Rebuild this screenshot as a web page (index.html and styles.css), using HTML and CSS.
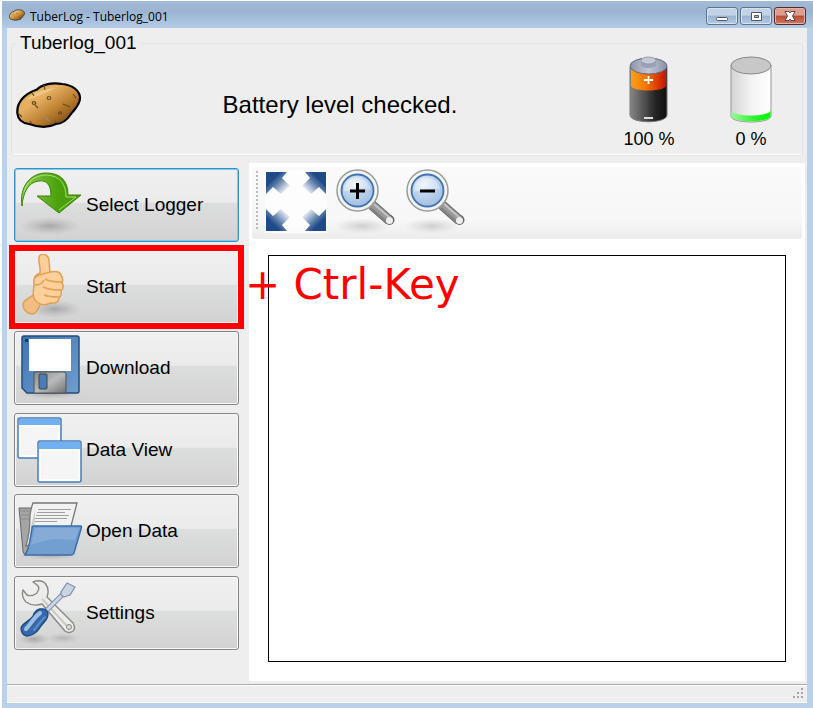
FILE: index.html
```html
<!DOCTYPE html>
<html lang="en">
<head>
    <meta charset="utf-8">
    <title>TuberLog - Tuberlog_001</title>
    <link rel="stylesheet" href="styles.css">
</head>
<body>
    <!-- shared gradients and symbols -->
    <svg class="defs" width="0" height="0" aria-hidden="true">
        <defs>
            <radialGradient id="shade">
                <stop offset="0" stop-color="#777" stop-opacity=".5"/>
                <stop offset="1" stop-color="#999" stop-opacity="0"/>
            </radialGradient>
            <linearGradient id="skin" x1="0" y1="0" x2="1" y2="1">
                <stop offset="0" stop-color="#dba95a"/>
                <stop offset=".35" stop-color="#e5b063"/>
                <stop offset=".6" stop-color="#bd8030"/>
                <stop offset="1" stop-color="#5a3004"/>
            </linearGradient>
            <linearGradient id="blue" x1="0" y1="0" x2="1" y2="1">
                <stop offset="0" stop-color="#3f74b4"/>
                <stop offset="1" stop-color="#6f9dcd"/>
            </linearGradient>
            <linearGradient id="metal" x1="0" y1="0" x2="1" y2="1">
                <stop offset="0" stop-color="#888"/>
                <stop offset=".5" stop-color="#bbb"/>
                <stop offset="1" stop-color="#707070"/>
            </linearGradient>
            <radialGradient id="lens" cx=".4" cy=".3" r=".7">
                <stop offset="0" stop-color="#e8f1fa"/>
                <stop offset=".5" stop-color="#bcd3ec"/>
                <stop offset="1" stop-color="#a3c0e2"/>
            </radialGradient>
            <linearGradient id="fade" gradientUnits="userSpaceOnUse" x1="11" y1="12" x2="23" y2="24">
                <stop offset="0" stop-color="#204a87"/>
                <stop offset=".35" stop-color="#5d7daa"/>
                <stop offset="1" stop-color="#e9eef5"/>
            </linearGradient>
        </defs>
        <symbol id="potato" viewBox="0 0 66 46">
            <path d="M1.500 32C0 21 8 12 21 7.500C25 3 35 0 46 2C57 3 64 9 64 16C64 23 58 28 55 32C51 38 47 42 40 42C34 45 24 46 13 42C6 41 2 37 1.500 32Z" fill="url(#skin)" stroke="#000" stroke-width="2.200"/>
            <path d="M9 19Q20 7 40 6Q29 11 22 14Q13 18 9 19Z" fill="#fbdba8" opacity=".5"/>
            <g fill="none" stroke="#6b4a1e" stroke-width="1.200">
                <ellipse cx="33" cy="16" rx="1.800" ry="1.500"/><ellipse cx="18" cy="21" rx="1.800" ry="1.400"/><ellipse cx="44" cy="31" rx="1.500" ry="1.200"/>
                <path d="M19 23L22 26M47 22L54 25M28 3L29 8M16 11L18 14M57 12L60 16M3 32L6 35M14 39L16 42M39 39L41 41"/>
                <path d="M26 34L34 39" stroke="#998877"/>
            </g>
        </symbol>
        <symbol id="magnifier" viewBox="0 0 66 70">
            <ellipse cx="30" cy="59" rx="28" ry="8" fill="url(#shade)" opacity=".6"/>
            <path d="M40 38L57 53" stroke="#666" stroke-width="10"/>
            <circle cx="57.500" cy="53" r="5" fill="#666"/>
            <path d="M40 38L57 53" stroke="#999" stroke-width="8"/>
            <path d="M42 37L58 51" stroke="#c4c4c4" stroke-width="2"/>
            <path d="M39 41L54 54" stroke="#7d7d7d" stroke-width="1.500"/>
            <circle cx="57.500" cy="53.500" r="3.500" fill="#eee"/>
            <circle cx="25.500" cy="23.500" r="20.500" fill="#f3f3f1" stroke="#999b98" stroke-width="1.500"/>
            <circle cx="25.500" cy="23.500" r="16" fill="url(#lens)" stroke="#3f73b1" stroke-width="1.800"/>
            <path d="M12 25A13 13 0 0 1 38 22Q26 20 12 25Z" fill="#fff" opacity=".35"/>
        </symbol>
        <symbol id="corner" viewBox="0 0 66 70">
            <path d="M4 5H25L20 11L28 19L19 27L11 20L4 27Z" fill="url(#fade)"/>
        </symbol>
    </svg>

    <div class="window">
        <header class="titlebar">
            <svg class="app-icon"><use href="#potato"/></svg>
            <h1>TuberLog - Tuberlog_001</h1>
            <div class="window-buttons">
                <button type="button" aria-label="Minimize">
                    <svg width="30" height="16" viewBox="0 0 30 16"><rect x="9.500" y="9.500" width="11" height="3" rx="1" fill="#fff" stroke="#535666"/></svg>
                </button>
                <button type="button" aria-label="Maximize">
                    <svg width="30" height="16" viewBox="0 0 30 16"><path d="M10.500 4.500H20.500V12.500H10.500ZM13.500 7.500H17.500V9.500H13.500Z" fill="#fff" fill-rule="evenodd" stroke="#535666"/></svg>
                </button>
                <button type="button" class="close" aria-label="Close">
                    <svg width="30" height="16" viewBox="0 0 30 16"><path d="M10 3.500H14L15 5L16 3.500H20L17.500 8L20 12.500H16L15 11L14 12.500H10L12.500 8Z" fill="#fff" stroke="#5b4546"/></svg>
                </button>
            </div>
        </header>

        <div class="client">
            <fieldset class="logger">
                <legend>Tuberlog_001</legend>
                <div class="logger-row">
                    <svg class="potato"><use href="#potato"/></svg>
                    <p class="message">Battery level checked.</p>
                    <div class="gauge">
                        <svg width="42" height="68" viewBox="0 0 42 68">
                            <defs>
                                <linearGradient id="cell"><stop offset="0" stop-color="#888"/><stop offset=".35" stop-color="#555"/><stop offset=".7" stop-color="#222"/><stop offset="1" stop-color="#111"/></linearGradient>
                                <linearGradient id="orange"><stop offset="0" stop-color="#f9a11b"/><stop offset=".4" stop-color="#f57900"/><stop offset="1" stop-color="#c81400"/></linearGradient>
                                <linearGradient id="cap"><stop offset="0" stop-color="#8c93a8"/><stop offset=".5" stop-color="#c3c8d8"/><stop offset="1" stop-color="#8a8fa5"/></linearGradient>
                            </defs>
                            <path d="M2 11V59C2 68 39 68 39 59V11Z" fill="url(#cell)" stroke="#777"/>
                            <path d="M3 12V30C5 36 36 36 38 30V12Z" fill="url(#orange)"/>
                            <ellipse cx="20.500" cy="10" rx="18.500" ry="8" fill="url(#cap)" stroke="#666b7c"/>
                            <path d="M13 4V9C13 13 28 13 28 9V4Z" fill="#9ca2b6"/>
                            <ellipse cx="20.500" cy="4.500" rx="7.500" ry="3.500" fill="#c5cad9" stroke="#8b90a3" stroke-width=".8"/>
                            <path d="M16 24H25M20.500 20V28" stroke="#fff" stroke-width="1.800"/>
                            <path d="M16 62H25" stroke="#ddd" stroke-width="2"/>
                        </svg>
                        <span>100 %</span>
                    </div>
                    <div class="gauge">
                        <svg width="42" height="68" viewBox="0 0 42 68">
                            <defs>
                                <linearGradient id="glass"><stop offset="0" stop-color="#d4d4d4"/><stop offset=".5" stop-color="#f3f3f3"/><stop offset="1" stop-color="#fff"/></linearGradient>
                                <linearGradient id="green"><stop offset="0" stop-color="#9af79a"/><stop offset=".6" stop-color="#27f527"/><stop offset="1" stop-color="#0f0"/></linearGradient>
                            </defs>
                            <path d="M1 9V60C1 68 41 68 41 60V9Z" fill="url(#glass)" stroke="#999"/>
                            <path d="M1.500 55C6 61 36 61 40.500 55V60C40.500 67 1.500 67 1.500 60Z" fill="url(#green)"/>
                            <ellipse cx="21" cy="9.500" rx="20" ry="8.500" fill="#c8c8c8" stroke="#888"/>
                        </svg>
                        <span>0 %</span>
                    </div>
                </div>
            </fieldset>

            <div class="content">
                <nav class="sidebar">
                    <button type="button" class="action focused">
                        <svg viewBox="0 0 66 66">
                            <defs><linearGradient id="leaf" x1="0" y1="0" x2="1" y2="0"><stop offset="0" stop-color="#8ed04f"/><stop offset=".6" stop-color="#4ba20c"/><stop offset="1" stop-color="#4e9a06"/></linearGradient></defs>
                            <ellipse cx="33" cy="54" rx="30" ry="9" fill="url(#shade)"/>
                            <path d="M5 34C2 14 14 1 29 1C44 1 51 9 51 23H64L42 41L20 24H34C34 12 29 8 22 9C11 10 6 21 5 34Z" fill="url(#leaf)" stroke="#3d8205" stroke-linejoin="round"/>
                            <path d="M7 20C10 8 20 3 30 3C43 4 49 12 49 25H59L42 38" fill="none" stroke="#a3df72" stroke-width="1"/>
                        </svg>
                        Select Logger
                    </button>
                    <div class="callout">
                        <button type="button" class="action">
                            <svg viewBox="0 0 66 66">
                                <ellipse cx="38" cy="55" rx="27" ry="9" fill="url(#shade)"/>
                                <path d="M17 40C14 44 7 45 6 50C6 55 8 59 15 60C20 60 21 54 23 51L29 46Z" fill="#f2bd84" stroke="#e0a058" stroke-width="1.500"/>
                                <path d="M23 19C24 13 21 9 22 3C23 0 28 -1 31 3C33 7 32 13 33 18C38 17 43 17 44 21C46 24 46 27 45 29C47 32 46 35 44 37C45 40 44 42 42 44C42 48 38 50 33 49C28 52 24 51 20 48C14 44 17 36 17 30C16 25 18 21 23 19Z" fill="#fcd09a" stroke="#e0a058" stroke-width="1.500" stroke-linejoin="round"/>
                                <path d="M18 24C21 20 27 20 34 18M28 25C33 28 40 28 45 28M26 33C32 36 39 36 44 36M27 41C32 43 37 43 42 43M18 31Q25 31 27 26" fill="none" stroke="#e0a058" stroke-width="1.500"/>
                            </svg>
                            Start
                        </button>
                        <span class="callout-text">+ Ctrl-Key</span>
                    </div>
                    <button type="button" class="action">
                        <svg viewBox="0 0 66 66">
                            <ellipse cx="34" cy="58" rx="32" ry="6" fill="url(#shade)"/>
                            <path d="M5 3Q5 1 7 1H60Q62 1 62 3V56Q62 58 60 58H10L5 53Z" fill="url(#blue)" stroke="#244d7c" stroke-width="1.500"/>
                            <path d="M12 4H54V36H12Z" fill="#fff"/>
                            <rect x="8" y="4" width="3" height="3" fill="#173961"/>
                            <path d="M17 58V39Q17 37 19 37H47Q49 37 49 39V58Z" fill="url(#metal)" stroke="#555"/>
                            <rect x="22" y="39" width="8" height="15" rx="1" fill="#4b7cb8" stroke="#444"/>
                        </svg>
                        Download
                    </button>
                    <button type="button" class="action">
                        <svg viewBox="0 0 66 66">
                            <g fill="#f5f5f5" stroke="#4580bd" stroke-width="1.500">
                                <rect x="1" y="1" width="43" height="40" rx="2"/>
                                <path d="M2 2H43V8H2Z" fill="#72b0f2" stroke="none"/>
                                <path d="M3 9H42V39H3Z" fill="none" stroke="#fff"/>
                                <rect x="21" y="24" width="43" height="41" rx="2"/>
                                <path d="M22 25H63V32H22Z" fill="#72b0f2" stroke="none"/>
                                <path d="M23 33H62V63H23Z" fill="none" stroke="#fff"/>
                            </g>
                        </svg>
                        Data View
                    </button>
                    <button type="button" class="action">
                        <svg viewBox="0 0 66 66">
                            <ellipse cx="33" cy="57" rx="30" ry="5" fill="url(#shade)"/>
                            <path d="M2 10H18V40L8 56Q6 56 6 53Z" fill="#a5a5a5" stroke="#666"/>
                            <path d="M4 13H15M4 17H15M4 21H14" stroke="#8c8c8c"/>
                            <path d="M16 5H60L53 32L9 48Q13 35 13 17Q14 10 16 5Z" fill="#f2f2f2" stroke="#777" stroke-width="1.300"/>
                            <path d="M9 47Q14 42 14 28L18 12Q19 35 9 47Z" fill="#aaa" opacity=".5"/>
                            <path d="M21 11.500H54M20 14.500H48M19 17.500H52M18 20.500H50M18 23.500H40" stroke="#a0a0a0"/>
                            <path d="M17 28H64Q65 28 64 31L57 55Q56 57 54 57H8Q12 52 15 30Q15 28 17 28Z" fill="#729fcf" stroke="#3b6ea7" stroke-width="1.500"/>
                            <path d="M18 30H62L58 42Q30 39 14 47Z" fill="#9bbce0" opacity=".45"/>
                        </svg>
                        Open Data
                    </button>
                    <button type="button" class="action">
                        <svg viewBox="0 0 66 66">
                            <ellipse cx="17" cy="59" rx="16" ry="6" fill="url(#shade)"/>
                            <ellipse cx="46" cy="58" rx="18" ry="5" fill="url(#shade)" opacity=".7"/>
                            <path d="M16 2Q23 -1 28 3Q33 9 30 17L56 43Q59 48 56 51Q52 54 48 51L25 24Q16 27 9 22Q4 17 6 10L10 15Q15 17 20 13Q23 8 21 6Q19 4 16 2Z" fill="#ececea" stroke="#888a85" stroke-width="1.400" stroke-linejoin="round"/>
                            <path d="M25 19L50 46" stroke="#c9c9c6" stroke-width="2"/>
                            <circle cx="52" cy="47" r="2.500" fill="#ddd" stroke="#888"/>
                            <path d="M28 32L47 13" stroke="#7f90a8" stroke-width="5"/>
                            <path d="M28 32L47 13" stroke="#cbd6e4" stroke-width="3"/>
                            <path d="M44 12L50 3L58 7L53 15L47 17L44 15Z" fill="#c9d5e4" stroke="#8191aa" stroke-width="1.300" stroke-linejoin="round"/>
                            <path d="M23 29Q31 28 31 34C31 41 25 43 22 49Q18 55 10 56Q4 55 4 48C6 42 12 42 16 36Q18 30 23 29Z" fill="#3569ab" stroke="#1f4a80" stroke-width="1.300"/>
                            <path d="M23 33C16 38 15 43 9 49" fill="none" stroke="#9dbfe4" stroke-width="4" stroke-linecap="round"/>
                            <path d="M28 37C24 40 22 44 17 50" fill="none" stroke="#5b8fca" stroke-width="2" stroke-linecap="round"/>
                        </svg>
                        Settings
                    </button>
                </nav>

                <main class="view">
                    <div class="toolbar">
                        <span class="grip"></span>
                        <button type="button" class="tool" aria-label="Fit to window">
                            <svg viewBox="0 0 66 70">
                                <rect x="3" y="4" width="62" height="62" fill="#fff" opacity=".7"/>
                                <use href="#corner" width="66" height="70"/>
                                <use href="#corner" width="66" height="70" transform="matrix(-1 0 0 1 68 0)"/>
                                <use href="#corner" width="66" height="70" transform="matrix(1 0 0 -1 0 69)"/>
                                <use href="#corner" width="66" height="70" transform="matrix(-1 0 0 -1 68 69)"/>
                            </svg>
                        </button>
                        <button type="button" class="tool" aria-label="Zoom in">
                            <svg viewBox="0 0 66 70"><use href="#magnifier"/><path d="M18 24H33M25.500 16V32" stroke="#000" stroke-width="3"/></svg>
                        </button>
                        <button type="button" class="tool" aria-label="Zoom out">
                            <svg viewBox="0 0 66 70"><use href="#magnifier"/><path d="M18 24H33" stroke="#000" stroke-width="3"/></svg>
                        </button>
                    </div>
                    <div class="plot"></div>
                </main>
            </div>

            <footer class="statusbar">
                <svg width="12" height="12" viewBox="0 0 12 12" fill="#a5a5a5"><path d="M8 0h2v2h-2zM8 4h2v2h-2zM4 4h2v2h-2zM8 8h2v2h-2zM4 8h2v2h-2zM0 8h2v2h-2z"/></svg>
            </footer>
        </div>
    </div>
</body>
</html>
```

FILE: styles.css
```css
* { box-sizing: border-box; }
body { margin: 0; padding: 1px 0 0 2px; background: #fff; color: #000; font-family: "Liberation Sans", Arial, sans-serif; font-size: 20px; }
button { font: inherit; color: inherit; padding: 0; }
svg { display: block; flex: none; }
.defs { position: absolute; }

.window { display: flex; flex-direction: column; min-height: calc(100vh - 1px); padding: 0 6px 5px 5px; background: #b9d1ea; }

/* title bar */
.titlebar { display: flex; align-items: center; gap: 5px; height: 27px; margin: 0 -6px 0 -5px; padding: 0 7px 0 7px; background: linear-gradient(#a3b9d5, #9bb4d2 40%, #b4cce6); }
.titlebar h1 { flex: 1; margin: 0; padding-top: 3px; font: 12px "Open Sans", "Noto Sans", sans-serif; }
.app-icon { width: 16px; height: 12px; }
.window-buttons { display: flex; align-self: flex-start; gap: 2px; padding-top: 6px; }
.window-buttons button { width: 32px; height: 18px; border: 1px solid #5f7390; border-radius: 3px; background: linear-gradient(#c3d3e6 45%, #9bb2cf 50%, #b5cbe3); box-shadow: inset 0 0 0 1px #d5e2f0; }
.window-buttons .close { border-color: #562b2b; background: linear-gradient(#dc9c90 45%, #b94a37 50%, #cc7a62); box-shadow: inset 0 0 0 1px #e4b3aa; }

.client { display: flex; flex: 1; flex-direction: column; background: #eee; }

/* logger state */
.logger { margin: 3px 4px 0; padding: 0; border: 1px solid #dfe4e8; border-radius: 3px; box-shadow: inset 0 -1px #fff; }
.logger legend { margin-left: 4px; padding: 0 4px; line-height: 24px; font-size: 19px; }
.logger-row { display: flex; align-items: center; height: 100px; padding-left: 4px; }
.potato { width: 66px; height: 46px; }
.message { flex: 1; margin: 0; font-size: 24px; text-align: center; }
.gauge { display: flex; flex-direction: column; align-items: center; gap: 3px; width: 102px; padding-bottom: 4px; font-size: 18px; line-height: 24px; }

.content { display: flex; flex: 1; padding: 7px 2px 3px 7px; }

/* left buttons */
.sidebar { display: flex; flex-direction: column; justify-content: space-between; width: 225px; margin-right: 10px; padding: 5px 0 31px; }
.action { display: flex; align-items: center; gap: 3px; width: 100%; height: 74px; padding-left: 2px; border: 1px solid #858585; border-radius: 3px; background: linear-gradient(#f0f0f0, #ebebeb 46%, #dcdedd 48%, #d2d2d2); box-shadow: inset 0 0 0 1px #f8f8f8; font-size: 19px; text-align: left; }
.action svg { width: 66px; height: 66px; }
.focused { border-color: #3c8fc4; box-shadow: inset 0 0 0 1px #74d0f1; }

/* red marker round a button */
.callout { position: relative; }
.callout .action { border-radius: 0; outline: 6px solid #f00; outline-offset: -1px; }
.callout-text { position: absolute; top: 11px; left: 231px; color: #f00; font: 42px/48px "DejaVu Sans", Verdana, sans-serif; white-space: nowrap; }

/* plot area */
.view { display: flex; flex: 1; flex-direction: column; padding: 4px 3px 19px; background: #fff; }
.toolbar { display: flex; gap: 4px; height: 72px; padding-left: 3px; border-radius: 3px; background: linear-gradient(#fafafa, #f7f7f7 75%, #ececec); }
.grip { width: 3px; height: 60px; margin: 4px 0 0; background: repeating-linear-gradient(#bbb 0 2px, transparent 2px 4px) 1px 0 / 2px 60px no-repeat; }
.tool { width: 66px; height: 70px; border: 0; background: none; }
.plot { flex: 1; margin: 16px 16px 0; border: 1px solid #000; }

.statusbar { display: flex; align-items: flex-end; justify-content: flex-end; height: 19px; padding: 0 2px 2px; border-top: 1px solid #aaa; border-bottom: 1px solid #fff; box-shadow: inset 0 1px #fff; }
```
